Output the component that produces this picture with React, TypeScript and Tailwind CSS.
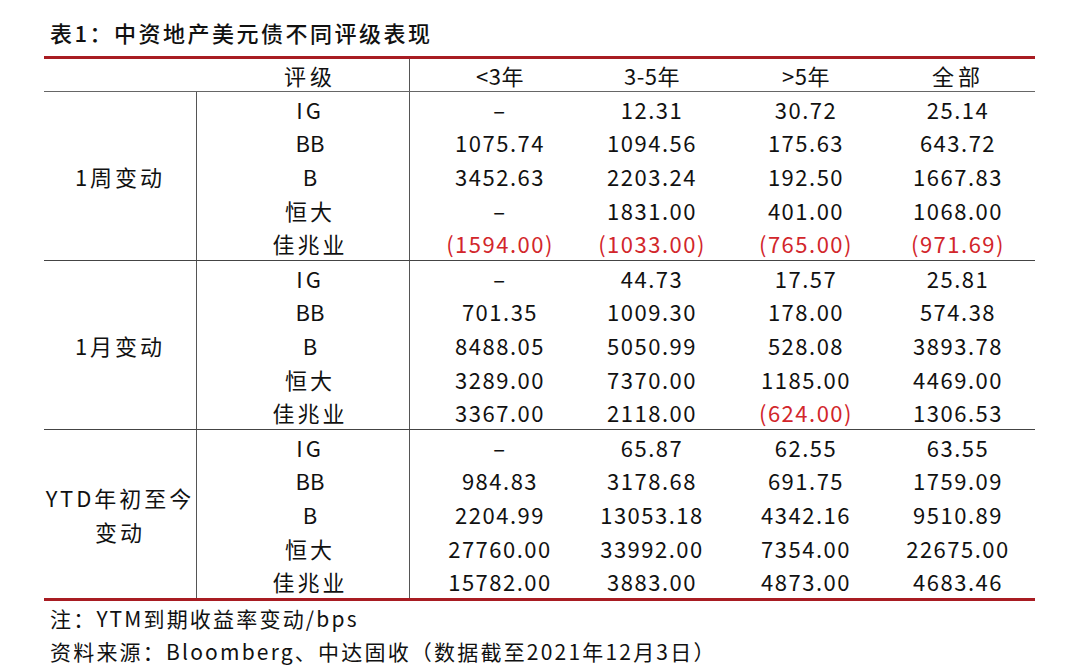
const FONT = "font-['Noto_Sans_CJK_SC',sans-serif]";

type Cell = { v: string; red?: boolean };

const groups: { label: string[]; rows: { name: string; cells: Cell[] }[] }[] = [
  {
    label: ['1周变动'],
    rows: [
      { name: 'IG', cells: [{ v: '–' }, { v: '12.31' }, { v: '30.72' }, { v: '25.14' }] },
      { name: 'BB', cells: [{ v: '1075.74' }, { v: '1094.56' }, { v: '175.63' }, { v: '643.72' }] },
      { name: 'B', cells: [{ v: '3452.63' }, { v: '2203.24' }, { v: '192.50' }, { v: '1667.83' }] },
      { name: '恒大', cells: [{ v: '–' }, { v: '1831.00' }, { v: '401.00' }, { v: '1068.00' }] },
      {
        name: '佳兆业',
        cells: [
          { v: '(1594.00)', red: true },
          { v: '(1033.00)', red: true },
          { v: '(765.00)', red: true },
          { v: '(971.69)', red: true },
        ],
      },
    ],
  },
  {
    label: ['1月变动'],
    rows: [
      { name: 'IG', cells: [{ v: '–' }, { v: '44.73' }, { v: '17.57' }, { v: '25.81' }] },
      { name: 'BB', cells: [{ v: '701.35' }, { v: '1009.30' }, { v: '178.00' }, { v: '574.38' }] },
      { name: 'B', cells: [{ v: '8488.05' }, { v: '5050.99' }, { v: '528.08' }, { v: '3893.78' }] },
      { name: '恒大', cells: [{ v: '3289.00' }, { v: '7370.00' }, { v: '1185.00' }, { v: '4469.00' }] },
      {
        name: '佳兆业',
        cells: [{ v: '3367.00' }, { v: '2118.00' }, { v: '(624.00)', red: true }, { v: '1306.53' }],
      },
    ],
  },
  {
    label: ['YTD年初至今', '变动'],
    rows: [
      { name: 'IG', cells: [{ v: '–' }, { v: '65.87' }, { v: '62.55' }, { v: '63.55' }] },
      { name: 'BB', cells: [{ v: '984.83' }, { v: '3178.68' }, { v: '691.75' }, { v: '1759.09' }] },
      { name: 'B', cells: [{ v: '2204.99' }, { v: '13053.18' }, { v: '4342.16' }, { v: '9510.89' }] },
      { name: '恒大', cells: [{ v: '27760.00' }, { v: '33992.00' }, { v: '7354.00' }, { v: '22675.00' }] },
      { name: '佳兆业', cells: [{ v: '15782.00' }, { v: '3883.00' }, { v: '4873.00' }, { v: '4683.46' }] },
    ],
  },
];

// column widths: group | rating | <3 | 3-5 | >5 | all
const COLS = 'grid grid-cols-[153px_213px_180px_124px_184px_137px]';

function Num({ c, last }: { c: Cell; last?: boolean }) {
  return (
    <div
      className={`flex items-center justify-center h-[33.6px] tracking-[1.5px] ${last ? 'pr-[17px]' : ''} ${
        c.red ? 'text-[#d2262b]' : 'text-[#111]'
      }`}
    >
      {c.v}
    </div>
  );
}

export default function App() {
  return (
    <div className={`w-[1080px] h-[668px] bg-white text-[#111] ${FONT} overflow-hidden`}>
      {/* Title */}
      <div className="pl-[50px] pt-[16px] h-[56px] text-[22px] font-medium tracking-[2.5px] leading-[32px]">
        表1：中资地产美元债不同评级表现
      </div>

      {/* Table */}
      <div className="ml-[44px] w-[991px] border-t-[3px] border-[#a81c22] text-[22px] leading-none tracking-[0.5px]">
        {/* header */}
        <div className={`${COLS} h-[33px] border-b border-[#666]`}>
          <div />
          <div className="flex items-center justify-center pl-[14px] border-r border-[#555] tracking-[4px]">
            评级
          </div>
          <div className="flex items-center justify-center">&lt;3年</div>
          <div className="flex items-center justify-center">3-5年</div>
          <div className="flex items-center justify-center">&gt;5年</div>
          <div className="flex items-center justify-center pr-[17px] tracking-[4px]">全部</div>
        </div>

        {groups.map((g, gi) => (
          <div
            key={gi}
            className={`${COLS} ${gi === groups.length - 1 ? 'border-b-[3px] border-[#a81c22]' : 'border-b border-[#444]'}`}
          >
            <div className="row-span-5 flex flex-col items-center justify-center border-r border-[#555] tracking-[3px] leading-[34px]">
              {g.label.map((l) => (
                <div key={l}>{l}</div>
              ))}
            </div>
            {g.rows.map((r) => (
              <div key={r.name} className="contents">
                <div
                  className={`flex items-center justify-center h-[33.6px] pl-[14px] border-r border-[#555] ${
                    r.name === 'BB' || r.name === 'B' ? 'tracking-[0px]' : 'tracking-[3px]'
                  }`}
                >
                  {r.name}
                </div>
                {r.cells.map((c, ci) => (
                  <Num key={ci} c={c} last={ci === 3} />
                ))}
              </div>
            ))}
          </div>
        ))}
      </div>

      {/* Notes */}
      <div className="pl-[50px] pt-[1px] text-[21px] tracking-[2.2px] leading-[33px]">
        <div>注：YTM到期收益率变动/bps</div>
        <div>资料来源：Bloomberg、中达固收（数据截至2021年12月3日）</div>
      </div>
    </div>
  );
}
